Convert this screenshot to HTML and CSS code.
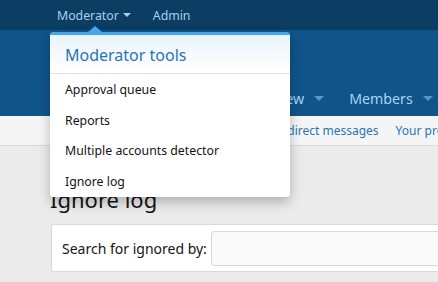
FILE: index.html
```html
<!DOCTYPE html>
<html>
<head>
<meta charset="utf-8">
<link rel="stylesheet" href="styles.css">
</head>
<body>
<div class="topbar">
  <span class="top-link">Moderator <span class="caret"></span></span>
  <span class="top-link">Admin</span>
</div>
<div class="header">
  <div class="tabs">
    <span class="tab">What's new <span class="caret caret-tab"></span></span>
    <span class="tab">Members <span class="caret caret-tab"></span></span>
    <span class="tab">Help</span>
  </div>
</div>
<div class="subnav">
  <span class="sub-link">Latest direct messages</span>
  <span class="sub-link">Your profile posts</span>
</div>
<div class="main">
  <h1 class="title">Ignore log</h1>
  <div class="block">
    <label class="block-label">Search for ignored by:</label>
    <div class="input"></div>
  </div>
</div>
<div class="menu">
  <div class="menu-arrow"></div>
  <div class="menu-header">Moderator tools</div>
  <div class="menu-item">Approval queue</div>
  <div class="menu-item">Reports</div>
  <div class="menu-item">Multiple accounts detector</div>
  <div class="menu-item">Ignore log</div>
</div>
</body>
</html>
```
FILE: styles.css
```css
* { box-sizing: border-box; }
html, body { margin: 0; padding: 0; }
body {
  width: 438px;
  height: 282px;
  overflow: hidden;
  background: #ebebeb;
  font-family: "Noto Sans", "DejaVu Sans", sans-serif;
  color: #141414;
  position: relative;
}
.topbar {
  height: 30px;
  background: #0c3d62;
  display: flex;
  align-items: center;
  padding-left: 57px;
  gap: 22px;
  font-size: 12.3px;
  color: #a9cff0;
}
.top-link { display: flex; align-items: center; }
.caret {
  display: inline-block;
  width: 0; height: 0;
  border-left: 4px solid transparent;
  border-right: 4px solid transparent;
  border-top: 4px solid currentColor;
  margin-left: 4px;
}
.header {
  height: 86px;
  background: #105489;
  display: flex;
  align-items: flex-end;
  overflow: hidden;
}
.tabs {
  display: flex;
  gap: 25px;
  padding-left: 228px;
  height: 36px;
  align-items: center;
  font-size: 14.2px;
  color: #a9d2f5;
  white-space: nowrap;
}
.tab { display: flex; align-items: center; }
.caret-tab {
  margin-left: 10px;
  border-top-color: #5f93c1;
  border-left-width: 5px;
  border-right-width: 5px;
  border-top-width: 5px;
}
.subnav {
  height: 30px;
  background: #f5f5f5;
  border-bottom: 1px solid #dadada;
  display: flex;
  align-items: center;
  gap: 17px;
  padding-left: 250px;
  font-size: 12px;
  color: #2577b1;
  white-space: nowrap;
  overflow: hidden;
}
.main { padding: 0 0 0 50px; }
.title {
  margin: 37px 0 0 0;
  font-size: 22px;
  font-weight: 400;
  line-height: 32px;
  color: #141414;
}
.block {
  margin-top: 9px;
  margin-left: 1px;
  background: #fff;
  border: 1px solid #dadada;
  border-right: none;
  border-radius: 3px 0 0 3px;
  height: 48px;
  display: flex;
  align-items: center;
  padding-left: 10px;
  gap: 4px;
}
.block-label { font-size: 14px; white-space: nowrap; }
.input {
  flex: 1;
  height: 35px;
  background: #fafafa;
  border: 1px solid #d8d8d8;
  border-right: none;
  border-radius: 4px 0 0 4px;
}
.menu {
  position: absolute;
  left: 50px;
  top: 32px;
  width: 240px;
  background: #fff;
  border-top: 3px solid #47a7eb;
  border-radius: 3px;
  box-shadow: 0 5px 12px rgba(0,0,0,0.25);
  padding-bottom: 1px;
}
.menu-arrow {
  position: absolute;
  left: 38px;
  top: -9px;
  width: 0; height: 0;
  border-left: 7px solid transparent;
  border-right: 7px solid transparent;
  border-bottom: 6px solid #47a7eb;
}
.menu-header {
  height: 39px;
  padding-left: 15px;
  padding-top: 2px;
  display: flex;
  align-items: center;
  font-size: 16px;
  color: #2577b1;
  background: linear-gradient(#eaf4fc, #ffffff);
  border-bottom: 1px solid #dfdfdf;
}
.menu-item {
  height: 30.5px;
  padding-left: 15px;
  padding-top: 1px;
  display: flex;
  align-items: center;
  font-size: 12.3px;
  color: #141414;
}
```
